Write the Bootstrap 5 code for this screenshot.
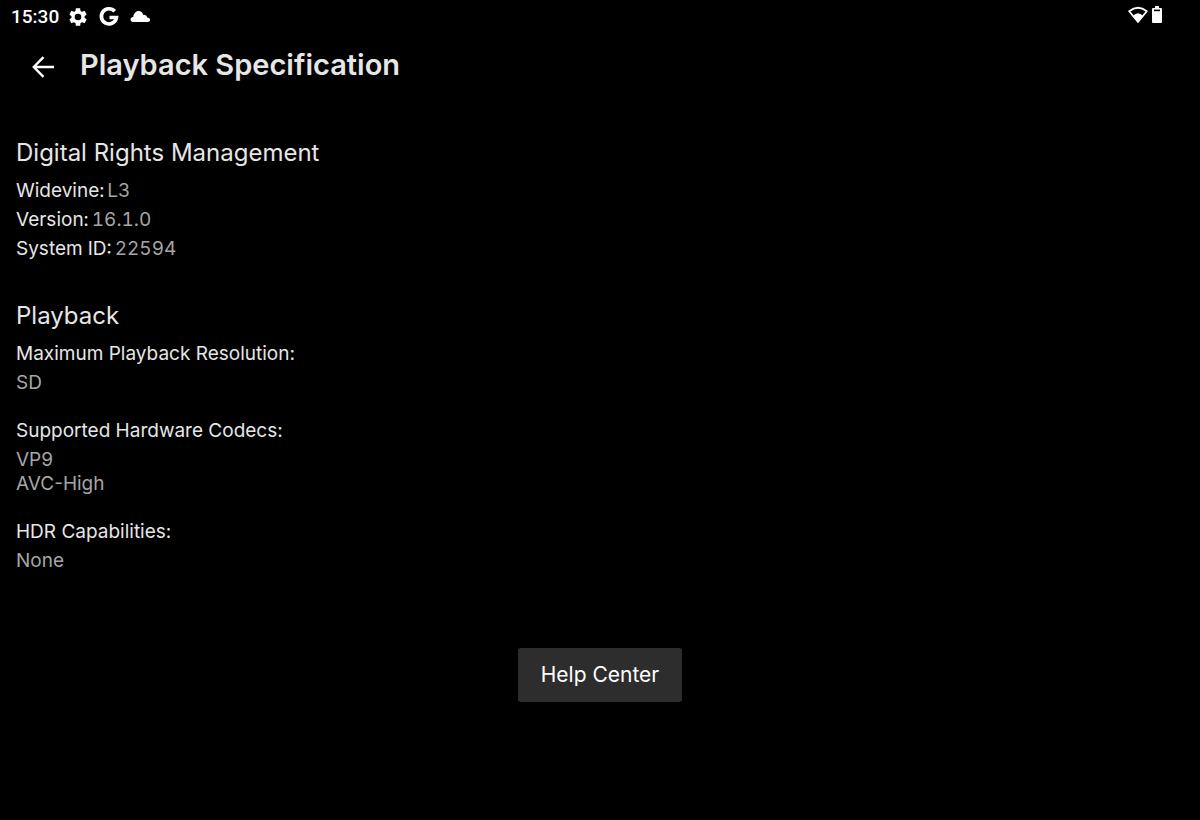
<!DOCTYPE html>
<html lang="en">
<head>
<meta charset="utf-8">
<meta name="viewport" content="width=device-width, initial-scale=1">
<title>Playback Specification</title>
<link rel="stylesheet" href="https://cdn.jsdelivr.net/npm/bootstrap@5.3.0/dist/css/bootstrap.min.css">
<style>
  body { background: #000; color: #e6e6e6; font-family: Inter, "Liberation Sans", sans-serif; font-size: 19px; line-height: 24px; }
  .status-bar { height: 32px; padding: 0 36px 0 11px; color: #fff; }
  .status-time { font: 500 19px/33px Roboto, sans-serif; margin-right: 8px; }
  .status-right { height: 30px; }
  .app-bar { height: 66px; padding-left: 30px; }
  .back-btn { width: 26px; height: 26px; margin-right: 24px; line-height: 0; }
  .page-title { font-size: 29px; line-height: 36px; font-weight: 600; }
  .spec { padding: 40px 16px 0; }
  .spec section + section { margin-top: 40px; }
  .spec h2 { font-size: 24px; line-height: 30px; font-weight: 400; margin-bottom: 11px; }
  .spec dl, .spec dt, .spec dd { margin: 0; }
  .spec dt { font-weight: 400; }
  .spec dd { color: #a6a6a6; }
  .inline-specs { display: grid; gap: 5px; font-variant-numeric: tabular-nums; }
  .inline-specs div { display: flex; gap: 3px; }
  .stacked-specs { display: grid; gap: 24px; }
  .stacked-specs dt { margin-bottom: 5px; }
  .help-btn { margin-top: 75px; padding: 12px 23px; font-size: 21px; line-height: 30px; border: 0; border-radius: 3px; --bs-btn-color: #fff; --bs-btn-bg: #2d2d2d; --bs-btn-hover-color: #fff; --bs-btn-hover-bg: #3b3b3b; }
</style>
</head>
<body>
<div class="status-bar d-flex align-items-start justify-content-between">
  <div class="d-flex align-items-center">
    <span class="status-time">15:30</span>
    <svg class="me-2" width="22" height="22" viewBox="0 0 24 24" fill="#fff" aria-hidden="true"><path d="M19.14 12.94c.04-.3.06-.61.06-.94s-.02-.64-.07-.94l2.03-1.58a.49.49 0 0 0 .12-.61l-1.92-3.32a.49.49 0 0 0-.59-.22l-2.39.96a7 7 0 0 0-1.62-.94l-.36-2.54a.48.48 0 0 0-.48-.41h-3.84c-.24 0-.43.17-.47.41l-.36 2.54c-.59.24-1.13.57-1.62.94l-2.39-.96a.48.48 0 0 0-.59.22L2.74 8.87c-.12.21-.08.47.12.61l2.03 1.58a6 6 0 0 0 0 1.88l-2.03 1.58a.49.49 0 0 0-.12.61l1.92 3.32c.12.22.37.29.59.22l2.39-.96c.5.38 1.03.7 1.62.94l.36 2.54c.05.24.24.41.48.41h3.84c.24 0 .44-.17.47-.41l.36-2.54c.59-.24 1.13-.56 1.62-.94l2.39.96c.22.08.47 0 .59-.22l1.92-3.32a.49.49 0 0 0-.12-.61zM12 15.6A3.6 3.6 0 1 1 12 8.4a3.6 3.6 0 0 1 0 7.2z"/></svg>
    <svg class="me-2" width="24" height="22" viewBox="0 0 24 22" fill="none" stroke="#fff" stroke-width="3.600" aria-hidden="true"><path d="M17.700 5.300A7.600 7.600 0 1 0 19.500 11.500H12.500"/></svg>
    <svg width="22" height="22" viewBox="0 0 22 22" fill="#fff" aria-hidden="true"><path d="M4.500 16C2.500 16 1.500 15 1.500 13.500c0-1.600 1.200-2.500 2.700-2.600C4.700 7.500 6.800 5 9.600 5c2.400 0 4 1.300 4.700 3.900 2.100-.3 3.500.8 3.800 2.500 2 .2 3 1 3 2.400 0 1.400-1 2.200-2.600 2.200z"/></svg>
  </div>
  <div class="status-right d-flex align-items-center">
    <svg width="20" height="18" viewBox="0 0 20 18" aria-hidden="true"><path d="M1.200 5.200Q10-1.800 18.800 5.200L10 16z" fill="none" stroke="#fff" stroke-width="1.800" stroke-linejoin="round"/><path d="M5 9.800Q10 4.800 15 9.800L10 16z" fill="#fff"/></svg>
    <svg class="ms-1" width="12" height="18" viewBox="0 0 12 18" aria-hidden="true"><path d="M3 0h4v2h2q1 0 1 1v13q0 1-1 1H1q-1 0-1-1V3q0-1 1-1h2z" fill="#fff"/><path d="M2 3.600h6v1.600H2z" fill="#000"/></svg>
  </div>
</div>
<header class="app-bar d-flex align-items-center">
  <button type="button" class="back-btn btn p-0 border-0" aria-label="Back">
    <svg width="26" height="26" viewBox="0 0 26 26" fill="none" stroke="#fff" stroke-width="2.400"><path d="M24 15H4M13.500 5.200L3.800 15l9.700 9.800"/></svg>
  </button>
  <h1 class="page-title mb-0">Playback Specification</h1>
</header>
<main class="spec">
  <section>
    <h2>Digital Rights Management</h2>
    <dl class="inline-specs">
      <div><dt>Widevine:</dt><dd>L3</dd></div>
      <div><dt>Version:</dt><dd>16.1.0</dd></div>
      <div><dt>System ID:</dt><dd>22594</dd></div>
    </dl>
  </section>
  <section>
    <h2>Playback</h2>
    <dl class="stacked-specs">
      <div><dt>Maximum Playback Resolution:</dt><dd>SD</dd></div>
      <div><dt>Supported Hardware Codecs:</dt><dd>VP9</dd><dd>AVC-High</dd></div>
      <div><dt>HDR Capabilities:</dt><dd>None</dd></div>
    </dl>
  </section>
  <div class="text-center">
    <button type="button" class="btn help-btn">Help Center</button>
  </div>
</main>
<script src="https://cdn.jsdelivr.net/npm/bootstrap@5.3.0/dist/js/bootstrap.bundle.min.js"></script>
</body>
</html>
